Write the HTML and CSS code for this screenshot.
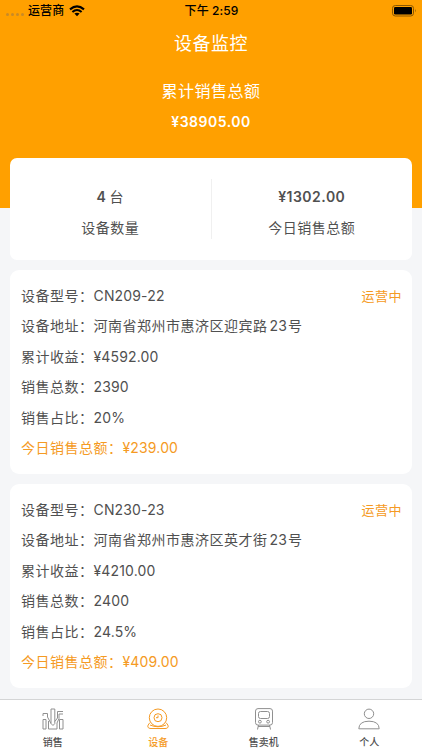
FILE: index.html
```html
<!DOCTYPE html>
<html lang="zh-CN">
<head>
<meta charset="utf-8">
<title>设备监控</title>
<link rel="stylesheet" href="styles.css">
</head>
<body>
<header class="hero">
  <div class="status">
    <div class="carrier">
      <span class="dots"><i></i><i></i><i></i><i></i></span>
      <span class="operator">运营商</span>
      <svg class="wifi" viewBox="0 0 16 12" width="16" height="12"><path d="M1 4.4Q8-1.6 15 4.4M3.4 7Q8 3 12.6 7" fill="none" stroke="#000" stroke-width="2.1"/><path d="M5.4 8.6Q8 6.7 10.6 8.6L8 11.3Z"/></svg>
    </div>
    <div class="time">下午 2:59</div>
    <svg class="battery" viewBox="0 0 25 12" width="25" height="12"><rect x=".5" y=".5" width="21" height="10.5" rx="2.8" fill="none" stroke="#8b5700"/><rect x="2" y="2" width="18" height="7.5" rx="1.3"/><path d="M23 4q1.5 1.8 0 3.6z" fill="#8b5700"/></svg>
  </div>
  <h1 class="title">设备监控</h1>
  <div class="total-label">累计销售总额</div>
  <div class="total">¥38905.00</div>
</header>
<main class="content">
  <section class="summary">
    <div class="stat"><b>4<span class="unit">台</span></b><span>设备数量</span></div>
    <div class="stat"><b>¥1302.00</b><span>今日销售总额</span></div>
  </section>
  <section class="card">
    <div class="row">设备型号：<span class="value">CN209-22</span><span class="state">运营中</span></div>
    <div class="row">设备地址：河南省郑州市惠济区迎宾路<span class="number">23</span>号</div>
    <div class="row">累计收益：<span class="value">¥4592.00</span></div>
    <div class="row">销售总数：<span class="value">2390</span></div>
    <div class="row">销售占比：<span class="value">20%</span></div>
    <div class="row today">今日销售总额：<span class="value">¥239.00</span></div>
  </section>
  <section class="card">
    <div class="row">设备型号：<span class="value">CN230-23</span><span class="state">运营中</span></div>
    <div class="row">设备地址：河南省郑州市惠济区英才街<span class="number">23</span>号</div>
    <div class="row">累计收益：<span class="value">¥4210.00</span></div>
    <div class="row">销售总数：<span class="value">2400</span></div>
    <div class="row">销售占比：<span class="value">24.5%</span></div>
    <div class="row today">今日销售总额：<span class="value">¥409.00</span></div>
  </section>
</main>
<nav class="tabs">
  <a class="tab"><svg viewBox="0 0 22 22"><path d="M1 11.500h3v9.500H1zM9 1h3.800v14.500L11 17.500L9 15.500zM17.500 11.500h3.500v9.500h-3.500zM1 8V5.500H5.500V9L9 15.500M6.500 13V21H15V15M12.800 13.500L15.500 10V3.500H21M15 15L17 10.500V6H21"/></svg><span>销售</span></a>
  <a class="tab active"><svg viewBox="0 0 22 22"><circle cx="11" cy="9.700" r="8.700"/><circle cx="11" cy="9.700" r="4"/><path d="M11 7.500v2.200H9M3.200 14.500C-1 18.500 1 20.500 4 20.500H18C21 20.500 23 18.500 18.800 14.500M3 17Q11 20.500 19 17"/></svg><span>设备</span></a>
  <a class="tab"><svg viewBox="0 0 22 22"><rect x="2.500" y=".6" width="17" height="16.500" rx="2.500"/><rect x="5.500" y="3.500" width="11" height="7" rx="2"/><circle cx="6.900" cy="13.700" r="1.400"/><circle cx="15.100" cy="13.700" r="1.400"/><path d="M5.500 17L4.500 21.500M16.500 17L17.500 21.500M5 18.500H17"/></svg><span>售卖机</span></a>
  <a class="tab"><svg viewBox="0 0 22 22"><circle cx="11" cy="5.800" r="4.700"/><path d="M.8 20.800Q1 13.200 11 13.200T21.200 20.800Z"/></svg><span>个人</span></a>
</nav>
</body>
</html>
```
FILE: styles.css
```css
* { box-sizing: border-box; }
body {
  margin: 0;
  width: 422px;
  height: 750px;
  overflow: hidden;
  display: flex;
  flex-direction: column;
  background: #f5f6f8;
  color: #505050;
  font-family: Inter, "Noto Sans CJK SC", sans-serif;
  font-size: 14px;
  letter-spacing: .5px;
}
.hero {
  flex: none;
  height: 208px;
  background: #ffa000;
  color: #fff;
  text-align: center;
}
.status {
  height: 21px;
  padding: 0 5px 0 6px;
  display: grid;
  grid-template-columns: 1fr auto 1fr;
  align-items: center;
  color: #000;
  font-size: 12px;
  font-weight: 500;
  line-height: 21px;
  letter-spacing: .1px;
}
.carrier { display: flex; align-items: center; }
.dots { display: flex; gap: 2px; width: 22px; padding-top: 7px; }
.dots i { width: 3px; height: 3px; border-radius: 50%; background: #c98a27; }
.wifi { margin-left: 5px; }
.battery { justify-self: end; }
.title {
  margin: 9px 0 0;
  font-size: 18px;
  font-weight: 400;
  line-height: 28px;
}
.total-label { margin-top: 20px; font-size: 16px; line-height: 26px; }
.total { margin-top: 8px; font-weight: 600; line-height: 20px; }
.content { flex: 1; min-height: 0; padding: 0 10px; margin-top: -50px; }
.summary {
  height: 102px;
  display: flex;
  align-items: center;
  background: #fff;
  border-radius: 7px;
}
.stat {
  flex: 1;
  display: flex;
  flex-direction: column;
  align-items: center;
  height: 60px;
  padding-top: 8px;
  gap: 11px;
  line-height: 20px;
}
.stat b { font-weight: 600; }
.stat .unit { margin-left: 3px; font-weight: 400; }
.stat + .stat { border-left: 1px solid #f0f0f0; }
.card {
  height: 204px;
  margin-top: 10px;
  padding: 10.500px 10px 10.500px 11px;
  background: #fff;
  border-radius: 9px;
}
.row { display: flex; height: 30.500px; line-height: 30.500px; white-space: nowrap; }
.value { letter-spacing: .15px; }
.number { margin: 0 1px 0 2px; letter-spacing: .2px; }
.state { margin-left: auto; font-size: 13px; color: #f59a23; }
.today { color: #f59a23; }
.tabs {
  flex: none;
  height: 51px;
  display: flex;
  background: #fff;
  border-top: 1px solid #d4d5d6;
  position: relative;
}
.tab {
  flex: 1;
  display: flex;
  flex-direction: column;
  align-items: center;
  padding-top: 8px;
  font-size: 10px;
  font-weight: 500;
  line-height: 14px;
  letter-spacing: 0;
}
.tab svg { width: 22px; height: 22px; margin-bottom: 5px; fill: none; stroke: #909090; stroke-width: 1; }
.active { color: #f59a23; }
.active svg { stroke: #f59a23; }
```
